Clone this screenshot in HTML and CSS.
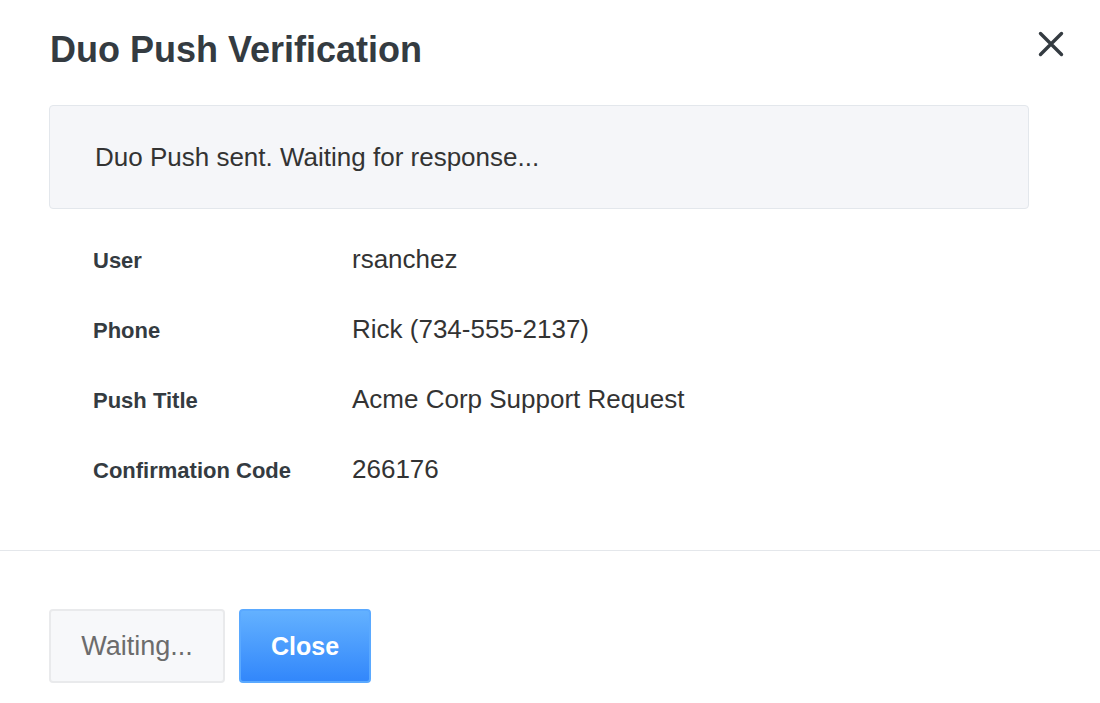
FILE: index.html
```html
<!DOCTYPE html>
<html>
<head>
<meta charset="utf-8">
<link rel="stylesheet" href="styles.css">
</head>
<body>
<div class="modal">
  <div class="modal-body">
    <div class="header">
      <h1 class="title">Duo Push Verification</h1>
      <button class="close-x" aria-label="Close">
        <svg width="26" height="26" viewBox="0 0 26 26"><path d="M2.5 2.5 L23.5 23.5 M23.5 2.5 L2.5 23.5" stroke="#343b41" stroke-width="3.4" stroke-linecap="round" fill="none"/></svg>
      </button>
    </div>
    <div class="alert">Duo Push sent. Waiting for response...</div>
    <dl class="details">
      <div class="row"><dt>User</dt><dd>rsanchez</dd></div>
      <div class="row"><dt>Phone</dt><dd>Rick (734-555-2137)</dd></div>
      <div class="row"><dt>Push Title</dt><dd>Acme Corp Support Request</dd></div>
      <div class="row"><dt>Confirmation Code</dt><dd>266176</dd></div>
    </dl>
  </div>
  <div class="footer">
    <button class="btn btn-wait">Waiting...</button>
    <button class="btn btn-primary">Close</button>
  </div>
</div>
</body>
</html>
```

FILE: styles.css
```css
* { box-sizing: border-box; }
html, body { margin: 0; padding: 0; background: #fff; }
body {
  font-family: "Liberation Sans", Arial, sans-serif;
  color: #333a40;
  width: 1100px;
  height: 703px;
  overflow: hidden;
}
.modal-body {
  padding: 0 71px 0 49px;
  border-bottom: 1px solid #e4e7eb;
  height: 551px;
}
.header {
  display: flex;
  justify-content: space-between;
  align-items: flex-start;
  height: 105px;
  padding-top: 30px;
}
.title {
  margin: 0 0 0 1px;
  font-size: 36px;
  font-weight: bold;
  line-height: 40px;
  color: #343b41;
}
.close-x {
  border: 0;
  background: none;
  padding: 0;
  margin: 1px -35px 0 0;
  width: 26px;
  height: 26px;
  cursor: pointer;
}
.close-x svg { display: block; }
.alert {
  height: 104px;
  background: #f5f6f9;
  border: 1px solid #e3e7ec;
  border-radius: 4px;
  padding: 0 0 0 45px;
  display: flex;
  align-items: center;
  font-size: 26px;
  color: #333;
}
.details {
  margin: 35px 0 0 0;
  padding-left: 44px;
}
.row {
  display: flex;
  align-items: baseline;
  height: 70px;
  line-height: 30px;
}
.row dt {
  width: 259px;
  font-size: 22px;
  font-weight: bold;
  color: #343b41;
}
.row dd {
  margin: 0;
  font-size: 26px;
  color: #333;
}
.footer {
  display: flex;
  gap: 14px;
  padding: 58px 0 0 49px;
}
.btn {
  height: 74px;
  border-radius: 4px;
  font-family: "Liberation Sans", Arial, sans-serif;
  font-size: 27px;
  padding: 0;
  cursor: pointer;
}
.btn-wait {
  width: 176px;
  background: #f7f8fa;
  border: 2px solid #e9eaec;
  color: #6c6c6c;
}
.btn-primary {
  width: 132px;
  background: linear-gradient(#63b1ff, #3287fb);
  border: 2px solid #5aa9ff;
  color: #fff;
  font-size: 25px;
  font-weight: bold;
}
```
